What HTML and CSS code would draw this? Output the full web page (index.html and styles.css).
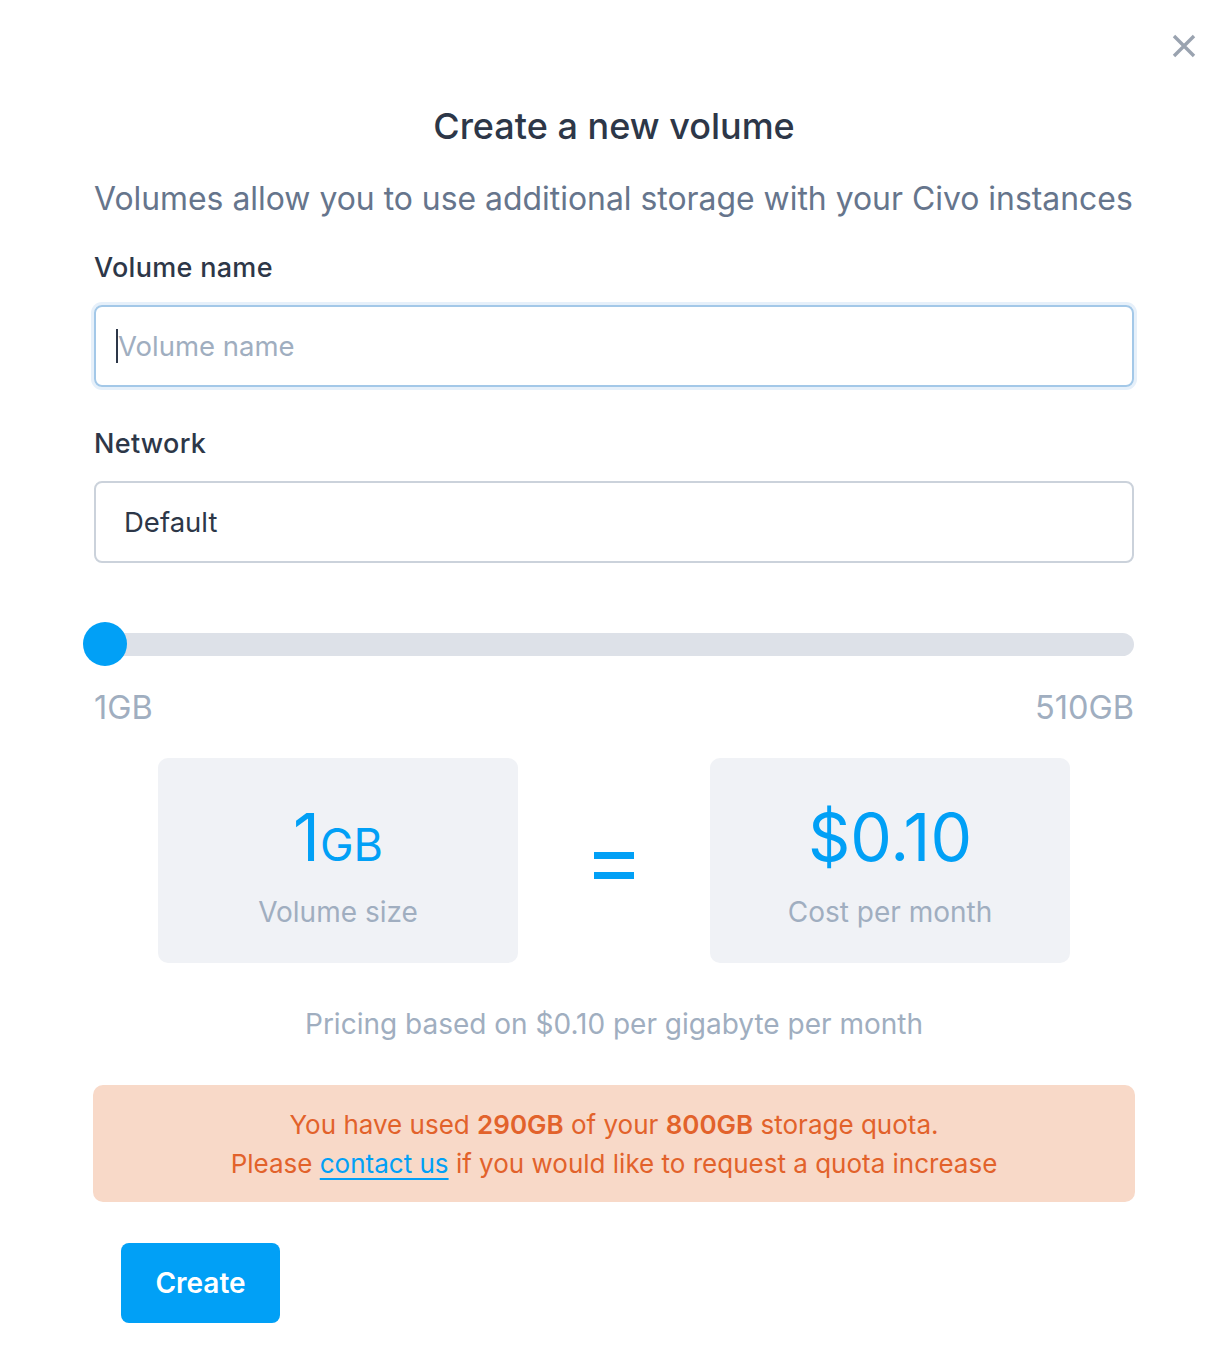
FILE: index.html
```html
<!DOCTYPE html>
<html>
<head>
<meta charset="utf-8">
<link rel="stylesheet" href="styles.css">
</head>
<body>
<div class="modal">
  <button class="close" aria-label="Close">
    <svg width="24" height="24" viewBox="0 0 24 24"><path d="M2 2L22 22M22 2L2 22" stroke="#9aa3b0" stroke-width="3.4" stroke-linecap="butt"/></svg>
  </button>
  <h1 class="title">Create a new volume</h1>
  <p class="subtitle">Volumes allow you to use additional storage with your Civo instances</p>

  <label class="label">Volume name</label>
  <div class="input focus"><span class="caret"></span><span class="placeholder">Volume name</span></div>

  <label class="label label-network">Network</label>
  <div class="input select"><span class="value">Default</span></div>

  <div class="slider">
    <div class="track"></div>
    <div class="thumb"></div>
  </div>
  <div class="range">
    <span>1GB</span>
    <span>510GB</span>
  </div>

  <div class="summary">
    <div class="card">
      <div class="big"><span class="num">1</span><span class="unit">GB</span></div>
      <div class="caption">Volume size</div>
    </div>
    <div class="equals"><span></span><span></span></div>
    <div class="card">
      <div class="big"><span class="num">$0.10</span></div>
      <div class="caption">Cost per month</div>
    </div>
  </div>

  <p class="pricing">Pricing based on $0.10 per gigabyte per month</p>

  <div class="alert">
    <p>You have used <b>290GB</b> of your <b>800GB</b> storage quota.</p>
    <p>Please <a href="#">contact us</a> if you would like to request a quota increase</p>
  </div>

  <button class="create">Create</button>
</div>
</body>
</html>
```
FILE: styles.css
```css
* { box-sizing: border-box; }
html, body { margin: 0; padding: 0; background: #fff; }
body { font-family: Inter, "Noto Sans", sans-serif; color: #2d3748; }

.modal {
  position: relative;
  width: 1228px;
  padding: 0 94px;
  display: flex;
  flex-direction: column;
}

.close {
  position: absolute;
  top: 34px;
  right: 32px;
  width: 24px;
  height: 24px;
  padding: 0;
  border: 0;
  background: none;
}
.close svg { display: block; }

.title {
  margin: 102px 0 0;
  text-align: center;
  font-size: 36px;
  line-height: 48px;
  font-weight: 500;
  color: #2d3748;
}

.subtitle {
  margin: 29px 0 0;
  font-size: 31.9px;
  line-height: 40px;
  color: #66758c;
  white-space: nowrap;
}

.label {
  display: block;
  margin-top: 33px;
  font-size: 27px;
  letter-spacing: 0.3px;
  line-height: 32px;
  font-weight: 500;
  color: #2d3748;
}
.label-network { margin-top: 41px; }

.input {
  margin-top: 21px;
  height: 82px;
  border: 2px solid #cbd2db;
  border-radius: 8px;
  display: flex;
  align-items: center;
  font-size: 27.5px;
}
.input.focus {
  border-color: #a3c8e8;
  box-shadow: 0 0 0 3px #e6f0fa;
}
.caret {
  width: 2px;
  height: 34px;
  background: #2d3748;
  margin-left: 20px;
}
.placeholder { color: #a0aec0; }
.select { padding-left: 28px; }
.value { color: #2d3748; }

.slider {
  position: relative;
  margin-top: 58px;
  height: 46px;
  display: flex;
  align-items: center;
}
.track {
  flex: 1;
  height: 23px;
  background: #dde1e8;
  border-radius: 12px;
}
.thumb {
  position: absolute;
  left: -11px;
  top: 1px;
  width: 44px;
  height: 44px;
  border-radius: 50%;
  background: #01a0f6;
}

.range {
  margin-top: 23px;
  display: flex;
  justify-content: space-between;
  font-size: 32.5px;
  line-height: 36px;
  color: #a0aec0;
}

.summary {
  margin-top: 32px;
  display: flex;
  justify-content: center;
  align-items: center;
}
.card {
  width: 360px;
  height: 205px;
  background: #f0f2f6;
  border-radius: 10px;
  display: flex;
  flex-direction: column;
  align-items: center;
  padding-top: 44px;
}
.big {
  display: flex;
  align-items: baseline;
  color: #01a0f6;
  height: 70px;
  line-height: 70px;
}
.num { font-size: 66px; }
.unit { font-size: 45px; }
.caption {
  margin-top: 22px;
  font-size: 28px;
  line-height: 36px;
  color: #a0aec0;
}
.equals {
  width: 192px;
  display: flex;
  flex-direction: column;
  align-items: center;
  gap: 13px;
  padding-top: 10px;
}
.equals span {
  display: block;
  width: 40px;
  height: 7px;
  background: #01a0f6;
}

.pricing {
  margin: 43px 0 0;
  text-align: center;
  font-size: 28px;
  line-height: 36px;
  color: #a0aec0;
}

.alert {
  margin: 43px -1px 0;
  background: #f8d9c8;
  border-radius: 10px;
  padding: 20px 0 19px;
  text-align: center;
  color: #e2622b;
  font-size: 26px;
  line-height: 39px;
}
.alert p { margin: 0; }
.alert b { font-weight: 600; }
.alert a { color: #01a0f6; text-decoration: underline; text-underline-offset: 5px; text-decoration-thickness: 2px; }

.create {
  margin: 41px 0 0 27px;
  align-self: flex-start;
  width: 159px;
  height: 80px;
  border: 0;
  border-radius: 8px;
  background: #01a0f6;
  color: #fff;
  font-family: Inter, "Noto Sans", sans-serif;
  font-size: 28px;
  font-weight: 600;
}
```
